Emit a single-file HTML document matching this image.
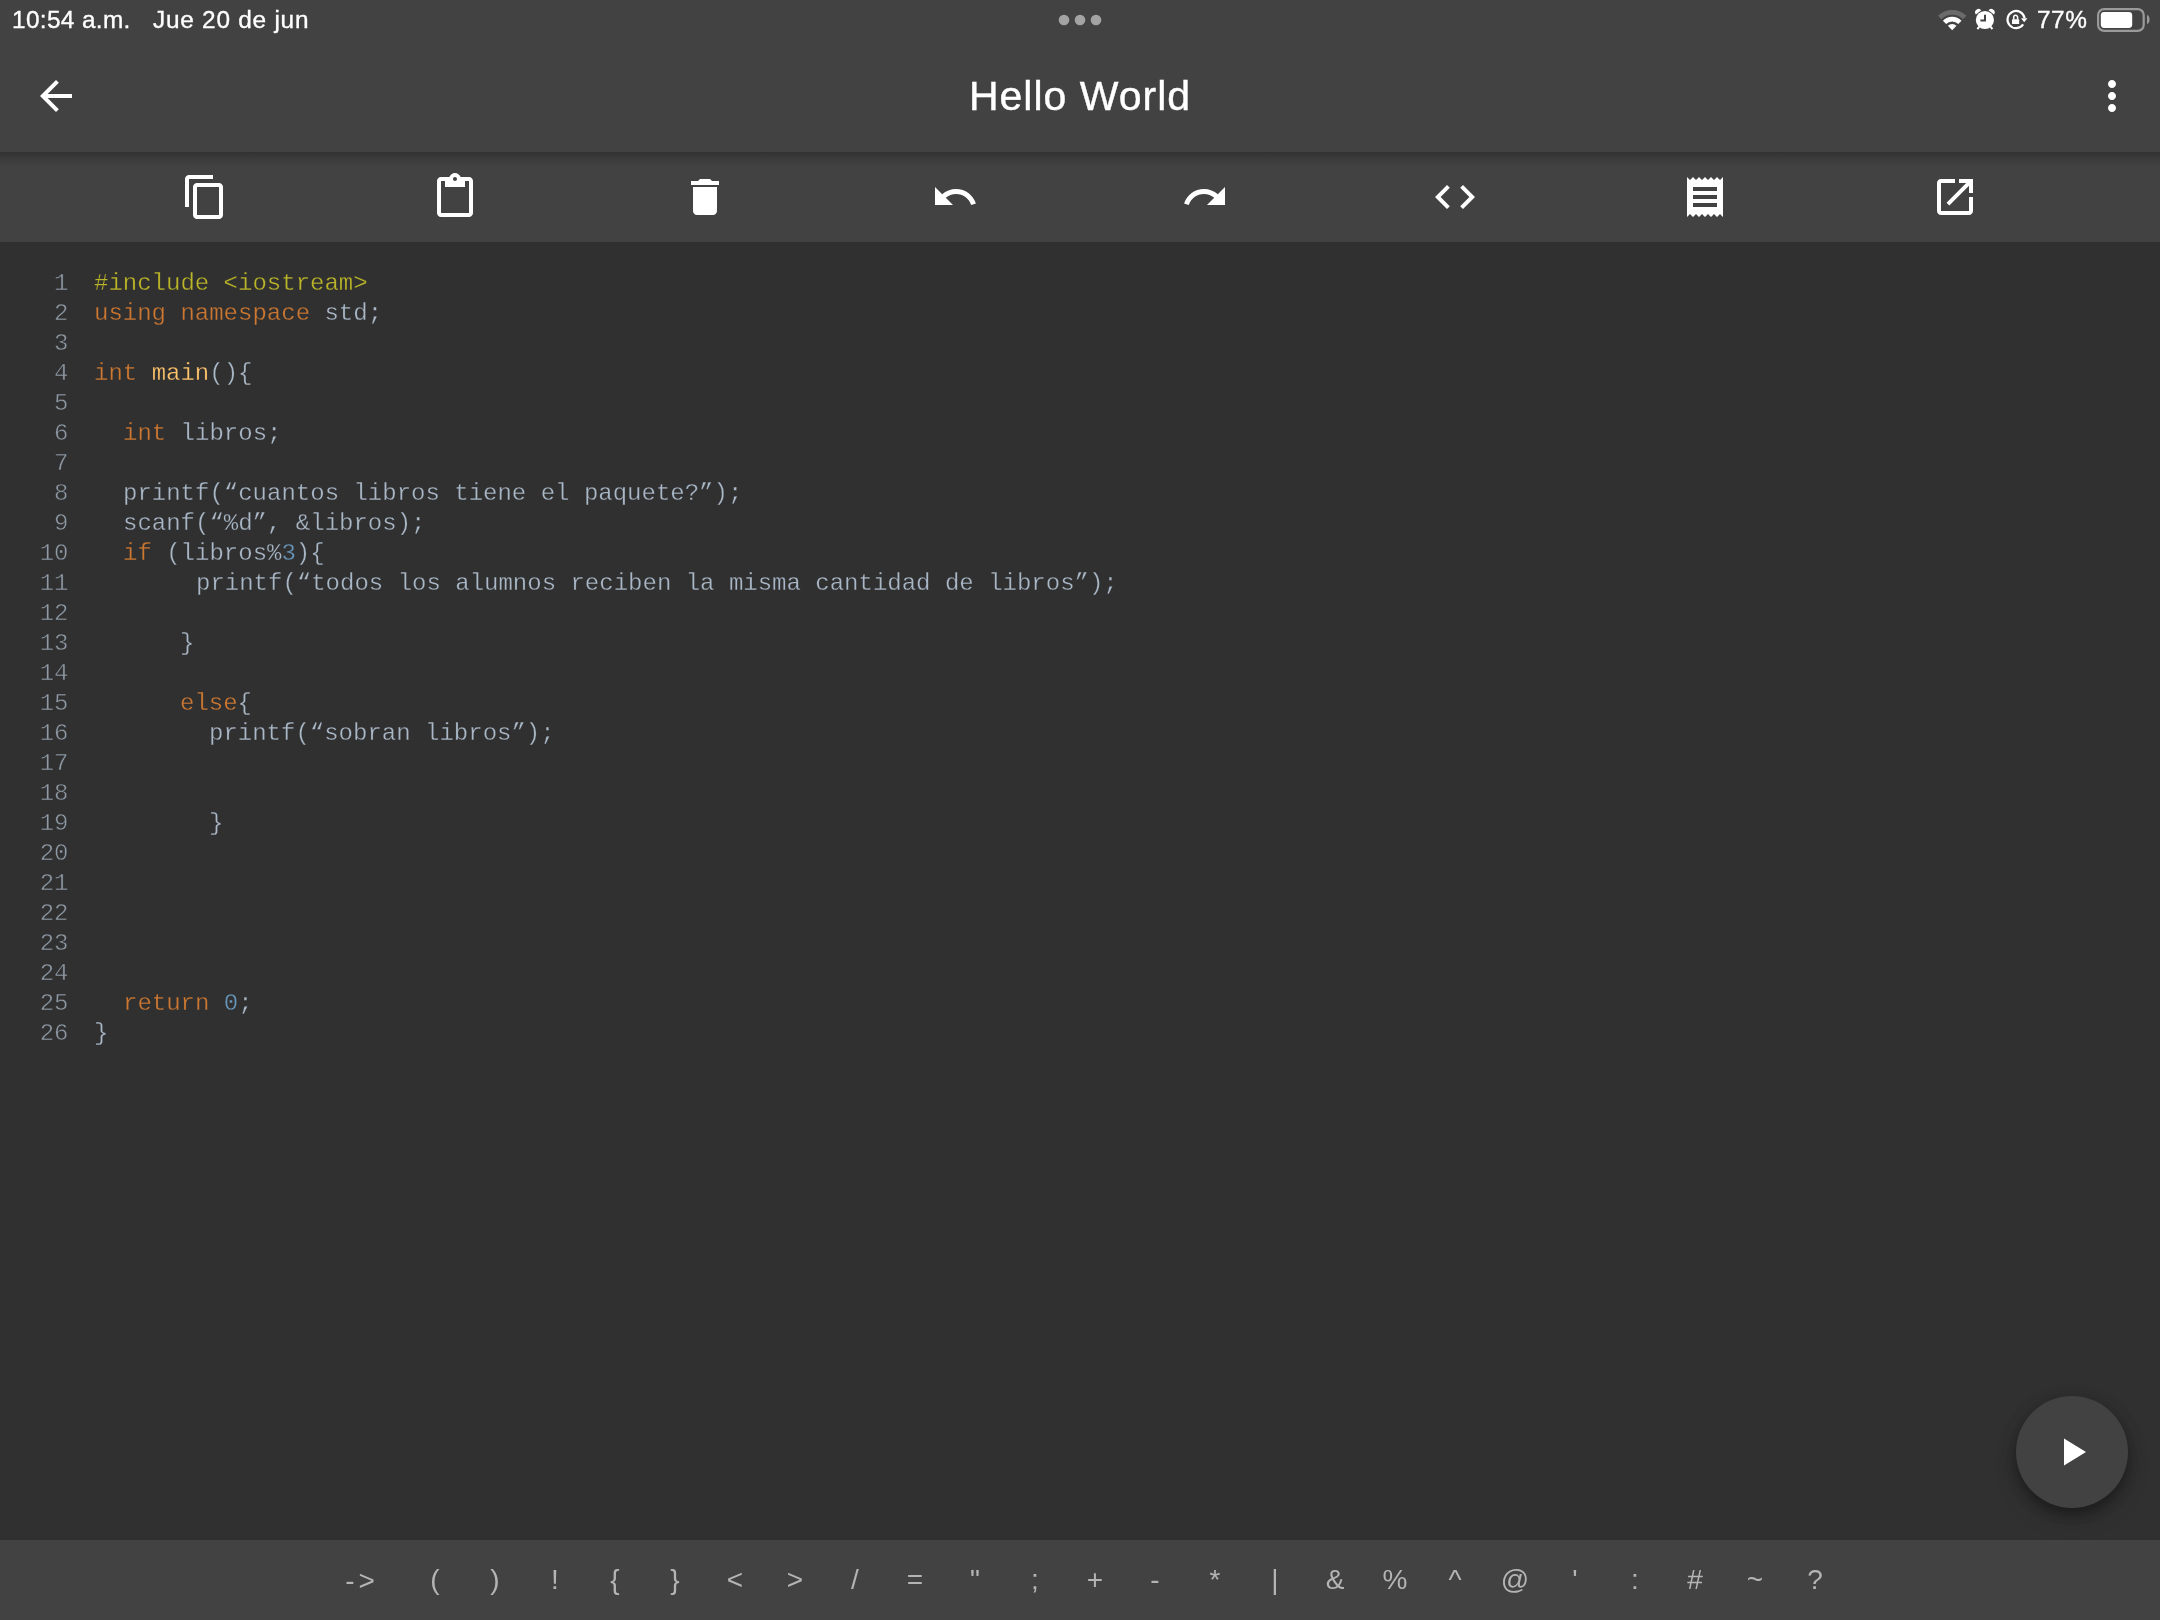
<!DOCTYPE html>
<html><head><meta charset="utf-8">
<style>
html,body{margin:0;padding:0;}
body{width:2160px;height:1620px;overflow:hidden;position:relative;background:#303030;font-family:"Liberation Sans",sans-serif;}
#top{position:absolute;left:0;top:0;width:2160px;height:152px;background:#424242;}
#tb{position:absolute;left:0;top:152px;width:2160px;height:90px;background:#424242;}
#tbshade{position:absolute;left:0;top:152px;width:2160px;height:14px;background:linear-gradient(#323232,rgba(50,50,50,0.65) 4px,rgba(66,66,66,0));}
#code{position:absolute;left:0;top:242px;width:2160px;height:1298px;background:#303030;}
#bot{position:absolute;left:0;top:1540px;width:2160px;height:80px;background:#424242;}
.st{position:absolute;will-change:transform;color:#fff;font-size:24px;white-space:nowrap;}
.ic{position:absolute;width:48px;height:48px;}
.ic svg{width:48px;height:48px;display:block;fill:#fff;}
.ln{position:absolute;will-change:transform;left:0;width:68.5px;-webkit-text-stroke:0.5px #303030;text-align:right;font-family:"Liberation Mono",monospace;font-size:24px;color:#8f9aa5;white-space:pre;}
.cl{position:absolute;will-change:transform;-webkit-text-stroke:0.3px #303030;left:94.5px;font-family:"Liberation Mono",monospace;font-size:24px;color:#a9b7c6;white-space:pre;}
.k{color:#cc7832}.pp{color:#bbb529}.fn{color:#ffc66d}.nu{color:#6897bb}
.sym{position:absolute;will-change:transform;top:1540px;height:80px;line-height:80px;text-align:center;color:#b4b4b4;font-size:28px;}
#fab{position:absolute;left:2016px;top:1396px;width:112px;height:112px;border-radius:56px;background:#424242;box-shadow:0 7px 12px -2px rgba(0,0,0,.28),0 12px 24px 0 rgba(0,0,0,.14),0 2px 18px 0 rgba(0,0,0,.12);}
</style></head><body>
<div id="top"></div>
<div id="tb"></div>
<div id="tbshade"></div>
<div id="code"></div>
<div id="bot"></div>

<!-- status bar -->
<div class="st" style="left:12px;top:5.5px;font-size:24.4px;letter-spacing:0.35px;-webkit-text-stroke:0.35px #fff">10:54 a.m.</div>
<div class="st" style="left:153px;top:5.5px;font-size:24.4px;letter-spacing:0.75px;-webkit-text-stroke:0.35px #fff">Jue 20 de jun</div>
<div class="st" style="left:2037px;top:5.5px;font-size:24.4px;letter-spacing:0.5px;-webkit-text-stroke:0.35px #fff">77%</div>
<svg style="position:absolute;left:1930px;top:0px" width="230" height="40" viewBox="0 0 230 40">
<g transform="translate(-1930,0)">
<path d="M1939.7 17.5 A17.7 17.7 0 0 1 1964.7 17.5" fill="none" stroke="#6b6b6b" stroke-width="4.8"/>
<path d="M1944.5 22.3 A10.9 10.9 0 0 1 1959.9 22.3" fill="none" stroke="#fff" stroke-width="4.6"/>
<path d="M1952.2 30.2 L1947.9 25.7 A6.1 6.1 0 0 1 1956.5 25.7 Z" fill="#fff"/>
<circle cx="1984.9" cy="20" r="9.1" fill="#fff"/>
<path d="M1975.9 14.6 A3.4 3.4 0 0 1 1981.3 10.3 Z" fill="#fff"/>
<path d="M1993.9 14.6 A3.4 3.4 0 0 0 1988.5 10.3 Z" fill="#fff"/>
<path d="M1979.3 26.8 L1977.3 29 M1990.5 26.8 L1992.5 29" stroke="#fff" stroke-width="2"/>
<path d="M1985 14.8 V20.4 H1980.4" fill="none" stroke="#424242" stroke-width="2"/>
<path d="M2023.2 24.4 A8.6 8.6 0 1 1 2024.6 18.2" fill="none" stroke="#fff" stroke-width="2.1"/>
<path d="M2021 18.2 L2027.4 18.2 L2024.2 22.3 Z" fill="#fff"/>
<rect x="2012" y="19.3" width="7.2" height="4.7" rx="0.6" fill="#fff"/>
<path d="M2013.7 19.6 V17.3 A1.95 1.95 0 0 1 2017.6 17.3 V19.6" fill="none" stroke="#fff" stroke-width="1.5"/>
<rect x="2098.1" y="9.1" width="45.6" height="21.8" rx="6" fill="none" stroke="#9a9a9a" stroke-width="2.2"/>
<rect x="2100.8" y="11.9" width="31.4" height="16.1" rx="3.4" fill="#fff"/>
<path d="M2147 15 A3.2 4.6 0 0 1 2147 24 Z" fill="#9a9a9a"/>
</g></svg>
<svg style="position:absolute;left:1050px;top:10px" width="60" height="20">
<circle cx="14" cy="10" r="5.3" fill="#a3a3a3"/><circle cx="30" cy="10" r="5.3" fill="#a3a3a3"/><circle cx="46" cy="10" r="5.3" fill="#a3a3a3"/></svg>

<!-- app bar -->
<div class="ic" style="left:32px;top:72px"><svg viewBox="0 0 24 24"><path d="M20 11H7.83l5.59-5.59L12 4l-8 8 8 8 1.41-1.41L7.83 13H20v-2z"/></svg></div>
<div class="ic" style="left:2088px;top:72px"><svg viewBox="0 0 24 24"><path d="M12 8c1.1 0 2-.9 2-2s-.9-2-2-2-2 .9-2 2 .9 2 2 2zm0 2c-1.1 0-2 .9-2 2s.9 2 2 2 2-.9 2-2-.9-2-2-2zm0 6c-1.1 0-2 .9-2 2s.9 2 2 2 2-.9 2-2-.9-2-2-2z"/></svg></div>
<div class="st" style="left:0;width:2160px;text-align:center;top:73px;font-size:41px;letter-spacing:1px;-webkit-text-stroke:0.4px #fff">Hello World</div>

<!-- toolbar -->
<div class="ic" style="left:181px;top:173px"><svg viewBox="0 0 24 24"><path d="M16 1H4c-1.1 0-2 .9-2 2v14h2V3h12V1zm3 4H8c-1.1 0-2 .9-2 2v14c0 1.1.9 2 2 2h11c1.1 0 2-.9 2-2V7c0-1.1-.9-2-2-2zm0 16H8V7h11v14z"/></svg></div>
<div class="ic" style="left:431px;top:173px"><svg viewBox="0 0 24 24"><path d="M19 2h-4.18C14.4.84 13.3 0 12 0c-1.3 0-2.4.84-2.82 2H5c-1.1 0-2 .9-2 2v16c0 1.1.9 2 2 2h14c1.1 0 2-.9 2-2V4c0-1.1-.9-2-2-2zm-7 0c.55 0 1 .45 1 1s-.45 1-1 1-1-.45-1-1 .45-1 1-1zm7 18H5V4h2v3h10V4h2v16z"/></svg></div>
<div class="ic" style="left:681px;top:173px"><svg viewBox="0 0 24 24"><path d="M6 19c0 1.1.9 2 2 2h8c1.1 0 2-.9 2-2V7H6v12zM19 4h-3.5l-1-1h-5l-1 1H5v2h14V4z"/></svg></div>
<div class="ic" style="left:931px;top:173px"><svg viewBox="0 0 24 24"><path d="M12.5 8c-2.65 0-5.050.99-6.9 2.6L2 7v9h9l-3.62-3.62c1.39-1.16 3.16-1.88 5.12-1.880 3.54 0 6.55 2.31 7.6 5.5l2.37-.78C21.08 11.03 17.15 8 12.5 8z"/></svg></div>
<div class="ic" style="left:1181px;top:173px"><svg viewBox="0 0 24 24"><path d="M18.4 10.6C16.55 8.99 14.15 8 11.5 8c-4.65 0-8.58 3.03-9.96 7.22L3.9 16c1.05-3.19 4.05-5.5 7.6-5.5 1.95 0 3.73.72 5.12 1.88L13 16h9V7l-3.6 3.6z"/></svg></div>
<div class="ic" style="left:1431px;top:173px"><svg viewBox="0 0 24 24"><path d="M9.4 16.6L4.8 12l4.6-4.6L8 6l-6 6 6 6 1.4-1.4zm5.2 0l4.6-4.6-4.6-4.6L16 6l6 6-6 6-1.4-1.4z"/></svg></div>
<div class="ic" style="left:1681px;top:173px"><svg viewBox="0 0 24 24"><path d="M18 17H6v-2h12v2zm0-4H6v-2h12v2zm0-4H6V7h12v2zM3 22l1.5-1.5L6 22l1.5-1.5L9 22l1.5-1.5L12 22l1.5-1.5L15 22l1.5-1.5L18 22l1.5-1.5L21 22V2l-1.5 1.5L18 2l-1.5 1.5L15 2l-1.5 1.5L12 2l-1.5 1.5L9 2 7.5 3.5 6 2 4.5 3.5 3 2v20z"/></svg></div>
<div class="ic" style="left:1931px;top:173px"><svg viewBox="0 0 24 24"><path d="M19 19H5V5h7V3H5c-1.11 0-2 .9-2 2v14c0 1.1.89 2 2 2h14c1.1 0 2-.9 2-2v-7h-2v7zM14 3v2h3.59l-9.83 9.830 1.41 1.41L19 6.41V10h2V3h-7z"/></svg></div>

<!-- code -->
<!--L-->
<div class="ln" style="top:270px">1</div>
<div class="cl" style="left:94.00px;top:270px"><span class="pp">#include &lt;iostream&gt;</span></div>
<div class="ln" style="top:300px">2</div>
<div class="cl" style="left:94.00px;top:300px"><span class="k">using namespace</span> std;</div>
<div class="ln" style="top:330px">3</div>
<div class="ln" style="top:360px">4</div>
<div class="cl" style="left:94.00px;top:360px"><span class="k">int</span> <span class="fn">main</span>(){</div>
<div class="ln" style="top:390px">5</div>
<div class="ln" style="top:420px">6</div>
<div class="cl" style="left:122.80px;top:420px"><span class="k">int</span> libros;</div>
<div class="ln" style="top:450px">7</div>
<div class="ln" style="top:480px">8</div>
<div class="cl" style="left:122.80px;top:480px">printf(“cuantos libros tiene el paquete?”);</div>
<div class="ln" style="top:510px">9</div>
<div class="cl" style="left:122.80px;top:510px">scanf(“%d”, &amp;libros);</div>
<div class="ln" style="top:540px">10</div>
<div class="cl" style="left:122.80px;top:540px"><span class="k">if</span> (libros%<span class="nu">3</span>){</div>
<div class="ln" style="top:570px">11</div>
<div class="cl" style="left:196.10px;top:570px">printf(“todos los alumnos reciben la misma cantidad de libros”);</div>
<div class="ln" style="top:600px">12</div>
<div class="ln" style="top:630px">13</div>
<div class="cl" style="left:180.40px;top:630px">}</div>
<div class="ln" style="top:660px">14</div>
<div class="ln" style="top:690px">15</div>
<div class="cl" style="left:180.40px;top:690px"><span class="k">else</span>{</div>
<div class="ln" style="top:720px">16</div>
<div class="cl" style="left:209.20px;top:720px">printf(“sobran libros”);</div>
<div class="ln" style="top:750px">17</div>
<div class="ln" style="top:780px">18</div>
<div class="ln" style="top:810px">19</div>
<div class="cl" style="left:209.20px;top:810px">}</div>
<div class="ln" style="top:840px">20</div>
<div class="ln" style="top:870px">21</div>
<div class="ln" style="top:900px">22</div>
<div class="ln" style="top:930px">23</div>
<div class="ln" style="top:960px">24</div>
<div class="ln" style="top:990px">25</div>
<div class="cl" style="left:122.80px;top:990px"><span class="k">return</span> <span class="nu">0</span>;</div>
<div class="ln" style="top:1020px">26</div>
<div class="cl" style="left:94.00px;top:1020px">}</div>
<!--/L-->

<!-- fab -->
<div id="fab"></div>
<svg style="position:absolute;left:2060px;top:1436px" width="30" height="32"><path d="M4 2.5 L26 16 L4 29.5 Z" fill="#fff"/></svg>

<!-- bottom symbols -->
<!--S-->
<div class="sym" style="left:315px;width:90px;letter-spacing:4px;text-indent:4px;top:1541px">-></div>
<div class="sym" style="left:405px;width:60px">(</div>
<div class="sym" style="left:465px;width:60px">)</div>
<div class="sym" style="left:525px;width:60px">!</div>
<div class="sym" style="left:585px;width:60px">{</div>
<div class="sym" style="left:645px;width:60px">}</div>
<div class="sym" style="left:705px;width:60px">&lt;</div>
<div class="sym" style="left:765px;width:60px">&gt;</div>
<div class="sym" style="left:825px;width:60px">/</div>
<div class="sym" style="left:885px;width:60px">=</div>
<div class="sym" style="left:945px;width:60px">"</div>
<div class="sym" style="left:1005px;width:60px">;</div>
<div class="sym" style="left:1065px;width:60px">+</div>
<div class="sym" style="left:1125px;width:60px">-</div>
<div class="sym" style="left:1185px;width:60px">*</div>
<div class="sym" style="left:1245px;width:60px">|</div>
<div class="sym" style="left:1305px;width:60px">&amp;</div>
<div class="sym" style="left:1365px;width:60px">%</div>
<div class="sym" style="left:1425px;width:60px">^</div>
<div class="sym" style="left:1485px;width:60px">@</div>
<div class="sym" style="left:1545px;width:60px">'</div>
<div class="sym" style="left:1605px;width:60px">:</div>
<div class="sym" style="left:1665px;width:60px">#</div>
<div class="sym" style="left:1725px;width:60px">~</div>
<div class="sym" style="left:1785px;width:60px">?</div>
<!--/S-->
</body></html>
